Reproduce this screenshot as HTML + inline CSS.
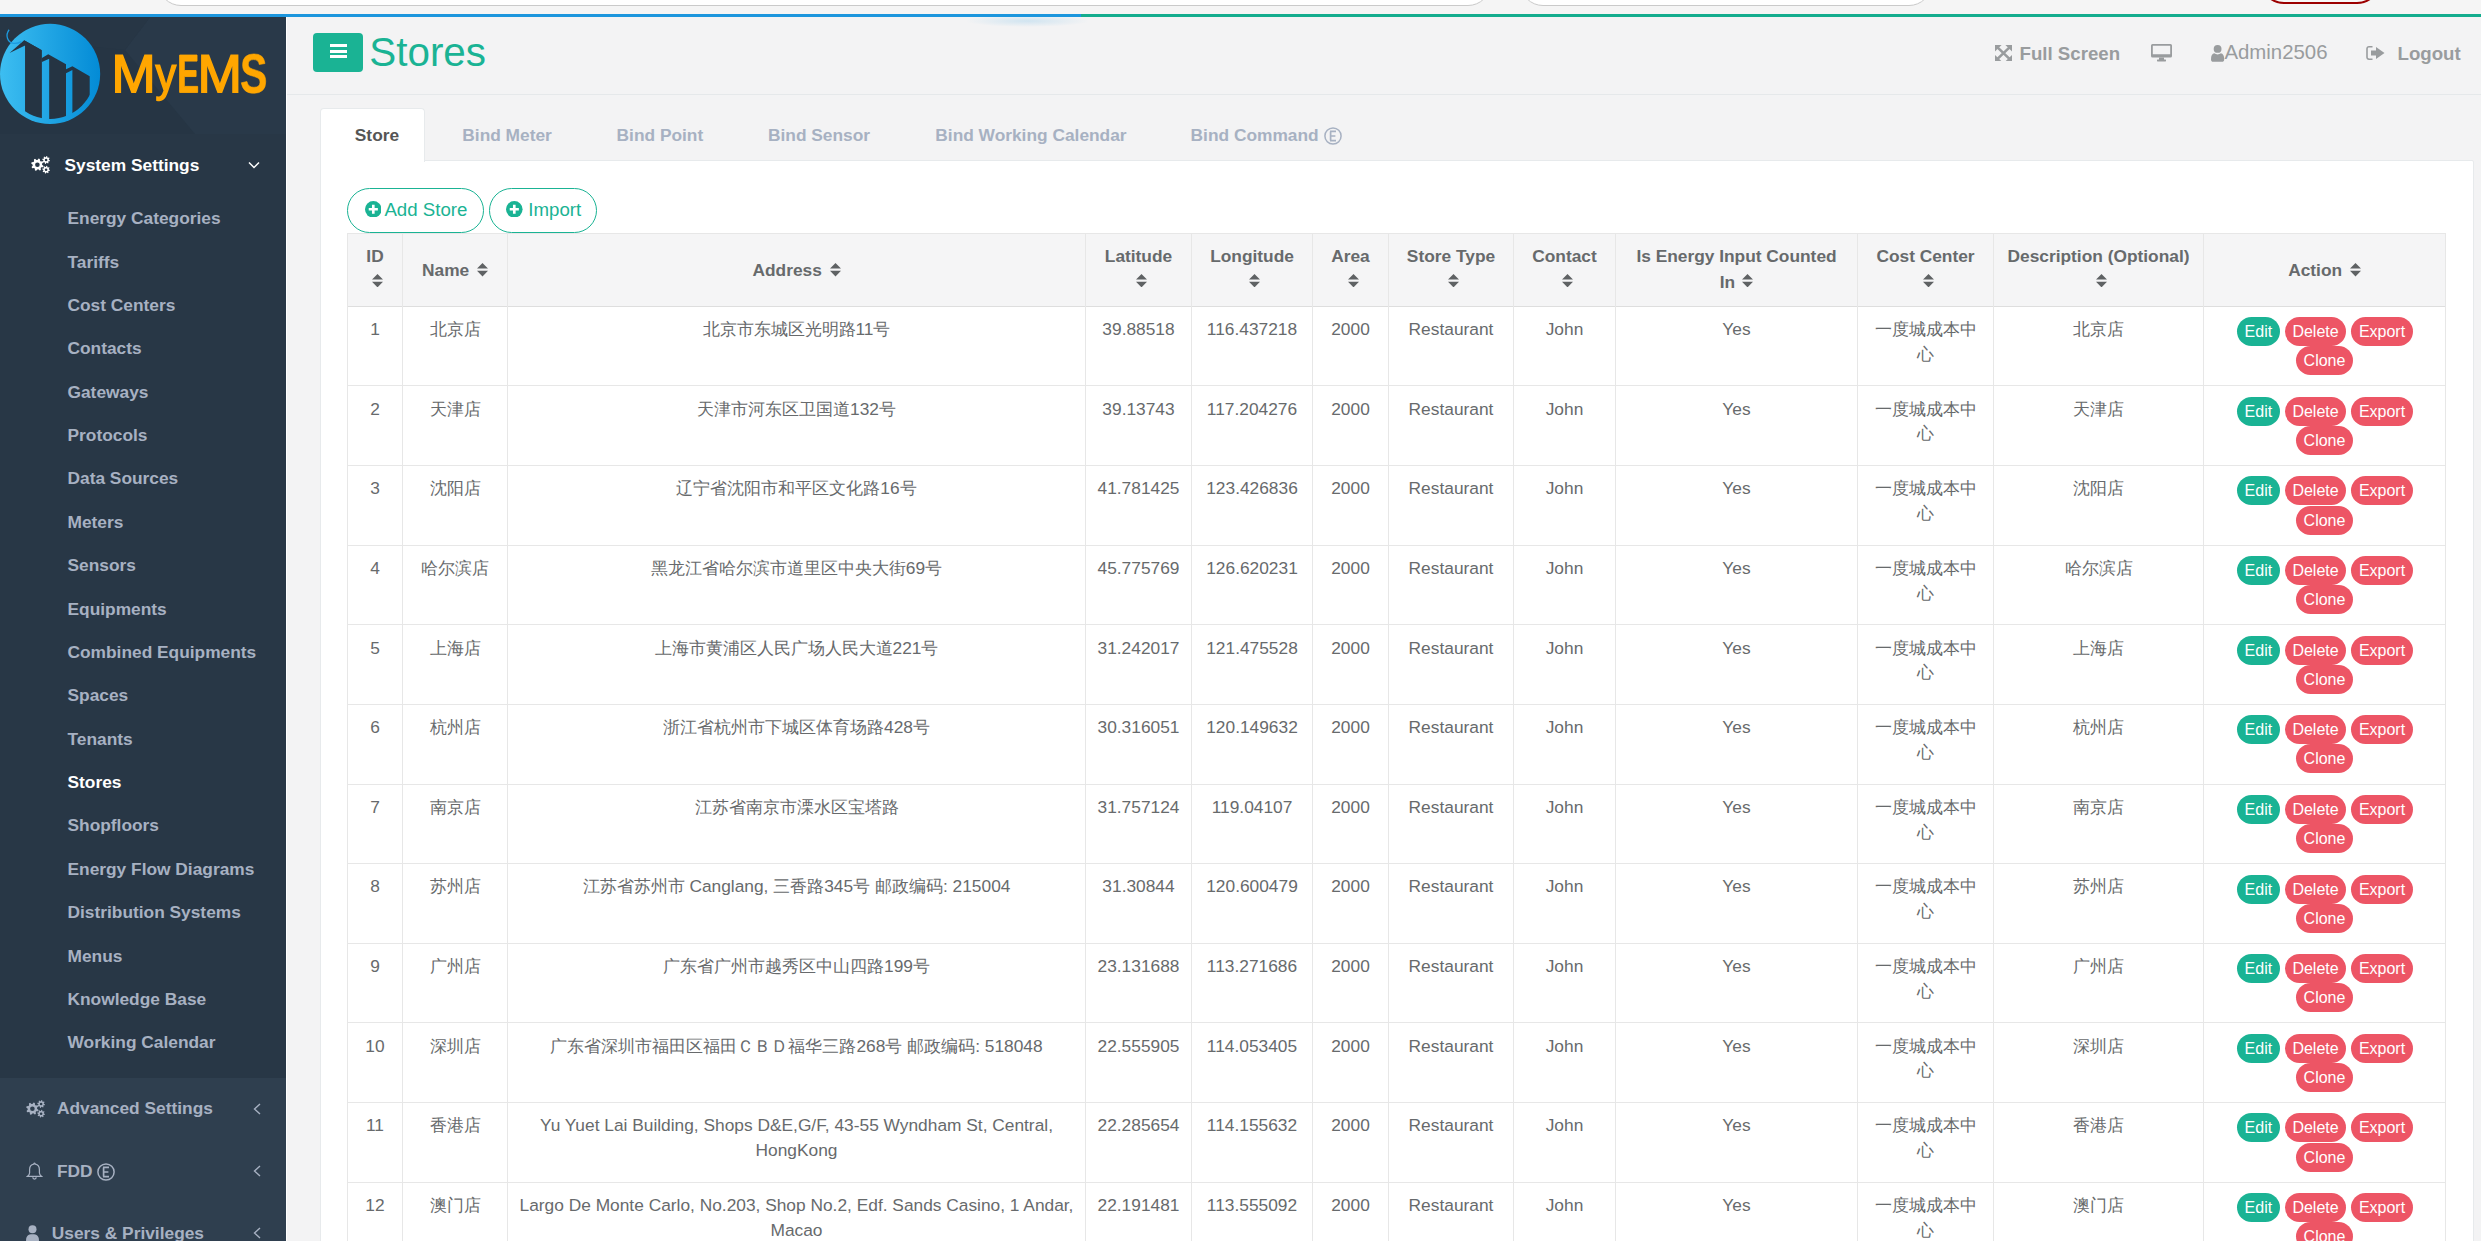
<!DOCTYPE html><html><head><meta charset="utf-8"><style>
*{box-sizing:border-box;margin:0;padding:0}
html,body{width:2481px;height:1241px;overflow:hidden;background:#f3f3f4;font-family:"Liberation Sans",sans-serif;color:#676a6c;font-size:17.333px;line-height:24.76px}
.abs{position:absolute}
#topbar{left:0;top:0;width:2481px;height:14px;background:#f5f5f5;overflow:hidden}
.inp{position:absolute;top:-40px;height:45.5px;background:#fff;border:1.5px solid #cacaca;border-radius:28px}
#pbar{left:0;top:14px;width:2481px;height:3px;background:#14ad8e}
#pbar2{left:0;top:14px;width:1081px;height:3px;background:#1c96dd}
#glow{left:965px;top:15px;width:125px;height:12px;border-radius:50%;background:radial-gradient(ellipse at center,rgba(28,150,221,.16),rgba(28,150,221,0) 70%)}
#sidebar{left:0;top:17px;width:286px;height:1224px;background:#2f3f4f;overflow:hidden}
#navhdr{left:0;top:0;width:286px;height:117px;background:#263544;overflow:hidden}
#active{left:0;top:117px;width:286px;height:944px;background:#283746}
.nt{position:absolute;font-weight:bold;color:#a7b1c2;font-size:17.333px;line-height:24.76px;white-space:nowrap}
#content{left:286px;top:17px;width:2195px;height:1224px;background:#f3f3f4}
</style></head><body>
<div id="topbar" class="abs"><div class="inp" style="left:158px;width:1333px"></div><div class="inp" style="left:1520px;width:412px"></div><div class="inp" style="left:2259.5px;width:121px;top:-44px;height:47.6px;background:#f8f8f8;border-color:#9c0000;border-width:2.2px"></div></div>
<div id="pbar" class="abs"></div><div id="pbar2" class="abs"></div>
<div id="sidebar" class="abs">
<div id="navhdr" class="abs">
<svg class="abs" style="left:0;top:0" width="286" height="117"><polygon points="150,0 286,0 286,117 195,117 125,33" fill="#293949"/><polygon points="0,0 150,0 125,33 0,20" fill="#273645"/></svg>
<svg class="abs" style="left:0;top:0" width="110" height="113" viewBox="0 0 1208 1241"><defs><linearGradient id="lg" x1="0" x2="1" y1="0" y2="0"><stop offset="0" stop-color="#3dbef1"/><stop offset="1" stop-color="#038bd6"/></linearGradient><clipPath id="cc"><circle cx="550" cy="625" r="494"/></clipPath></defs><circle cx="550" cy="625" r="550" fill="url(#lg)"/><g fill="#253443"><polygon points="105,395 265,255 460,365 275,312"/><g clip-path="url(#cc)"><polygon points="275,300 265,255 460,365 460,1300 275,1300"/><polygon points="460,450 530,410 725,520 725,1300 540,1300 540,458 460,494"/><polygon points="725,575 795,540 985,650 985,1300 795,1300 795,582 725,617"/></g></g><path d="M100,140 C55,200 80,280 150,290 C180,292 210,285 235,270" fill="none" stroke="#1c9be0" stroke-width="14"/></svg>
<svg class="abs" style="left:0;top:0" width="286" height="117"><g fill="#ffa600" stroke="#ffa600" stroke-linejoin="miter"><path transform="translate(111.50,75.05) scale(0.02591,-0.02598)" stroke-width="1.7" vector-effect="non-scaling-stroke" d="M1366 0V940Q1366 1096 1375 1240Q1326 1061 1287 960L923 0H789L420 960L364 1130L331 1240L334 1129L338 940V0H168V1409H419L794 432Q814 373 832 306Q851 238 857 208Q865 248 890 330Q916 411 925 432L1293 1409H1538V0Z"/><path transform="translate(155.55,73.55) scale(0.02010,-0.02329)" stroke-width="1.5" vector-effect="non-scaling-stroke" d="M191 -425Q117 -425 67 -414V-279Q105 -285 151 -285Q319 -285 417 -38L434 5L5 1082H197L425 484Q430 470 437 450Q444 431 482 320Q520 209 523 196L593 393L830 1082H1020L604 0Q537 -173 479 -258Q421 -342 350 -384Q280 -425 191 -425Z"/><path transform="translate(177.50,75.45) scale(0.01567,-0.02654)" stroke-width="0.9" vector-effect="non-scaling-stroke" d="M137 0V1409H1245V1181H432V827H1184V599H432V228H1286V0Z"/><path transform="translate(197.58,75.05) scale(0.02599,-0.02598)" stroke-width="1.7" vector-effect="non-scaling-stroke" d="M1366 0V940Q1366 1096 1375 1240Q1326 1061 1287 960L923 0H789L420 960L364 1130L331 1240L334 1129L338 940V0H168V1409H419L794 432Q814 373 832 306Q851 238 857 208Q865 248 890 330Q916 411 925 432L1293 1409H1538V0Z"/><path transform="translate(240.13,75.76) scale(0.01989,-0.02717)" stroke-width="0.6" vector-effect="non-scaling-stroke" d="M1286 406Q1286 199 1132 90Q979 -20 682 -20Q411 -20 257 76Q103 172 59 367L344 414Q373 302 457 252Q541 201 690 201Q999 201 999 389Q999 449 964 488Q928 527 864 553Q799 579 616 616Q458 653 396 676Q334 698 284 728Q234 759 199 802Q164 845 144 903Q125 961 125 1036Q125 1227 268 1328Q412 1430 686 1430Q948 1430 1080 1348Q1211 1266 1249 1077L963 1038Q941 1129 874 1175Q806 1221 680 1221Q412 1221 412 1053Q412 998 440 963Q469 928 525 904Q581 879 752 842Q955 799 1042 762Q1130 726 1181 678Q1232 629 1259 562Q1286 494 1286 406Z"/></g></svg>
</div>
<div id="active" class="abs"></div>
<svg class="abs" style="left:29.5px;top:138px" width="22" height="20" viewBox="0 0 22 20"><path fill="#ffffff" fill-rule="evenodd" d="M13.57,10.95 L13.21,12.13 L11.30,12.33 L10.71,13.04 L10.88,14.95 L9.79,15.53 L8.30,14.31 L7.38,14.40 L6.15,15.87 L4.97,15.51 L4.77,13.60 L4.06,13.01 L2.15,13.18 L1.57,12.09 L2.79,10.60 L2.70,9.68 L1.23,8.45 L1.59,7.27 L3.50,7.07 L4.09,6.36 L3.92,4.45 L5.01,3.87 L6.50,5.09 L7.42,5.00 L8.65,3.53 L9.83,3.89 L10.03,5.80 L10.74,6.39 L12.65,6.22 L13.23,7.31 L12.01,8.80 L12.10,9.72ZM9.70,9.70 A2.3,2.3 0 1 0 5.10,9.70 A2.3,2.3 0 1 0 9.70,9.70Z"/><path fill="#ffffff" fill-rule="evenodd" d="M19.98,5.39 L19.83,6.14 L18.57,6.32 L18.26,6.78 L18.57,8.02 L17.93,8.44 L16.91,7.68 L16.37,7.79 L15.71,8.88 L14.96,8.73 L14.78,7.47 L14.32,7.16 L13.08,7.47 L12.66,6.83 L13.42,5.81 L13.31,5.27 L12.22,4.61 L12.37,3.86 L13.63,3.68 L13.94,3.22 L13.63,1.98 L14.27,1.56 L15.29,2.32 L15.83,2.21 L16.49,1.12 L17.24,1.27 L17.42,2.53 L17.88,2.84 L19.12,2.53 L19.54,3.17 L18.78,4.19 L18.89,4.73ZM17.40,5.00 A1.3,1.3 0 1 0 14.80,5.00 A1.3,1.3 0 1 0 17.40,5.00Z"/><path fill="#ffffff" fill-rule="evenodd" d="M19.98,15.09 L19.83,15.84 L18.57,16.02 L18.26,16.48 L18.57,17.72 L17.93,18.14 L16.91,17.38 L16.37,17.49 L15.71,18.58 L14.96,18.43 L14.78,17.17 L14.32,16.86 L13.08,17.17 L12.66,16.53 L13.42,15.51 L13.31,14.97 L12.22,14.31 L12.37,13.56 L13.63,13.38 L13.94,12.92 L13.63,11.68 L14.27,11.26 L15.29,12.02 L15.83,11.91 L16.49,10.82 L17.24,10.97 L17.42,12.23 L17.88,12.54 L19.12,12.23 L19.54,12.87 L18.78,13.89 L18.89,14.43ZM17.40,14.70 A1.3,1.3 0 1 0 14.80,14.70 A1.3,1.3 0 1 0 17.40,14.70Z"/></svg>
<div class="nt" style="left:64.5px;top:135.66px;color:#ffffff;font-size:17.333px;line-height:24.76px;font-weight:bold;">System Settings</div>
<svg class="abs" style="left:247px;top:143px" width="14" height="10" viewBox="0 0 14 10"><polyline points="2,2.5 7,7.5 12,2.5" fill="none" stroke="#fff" stroke-width="1.5"/></svg>
<div class="nt" style="left:67.5px;top:189.21px;color:#a7b1c2;font-size:17.333px;line-height:24.76px;font-weight:bold;">Energy Categories</div>
<div class="nt" style="left:67.5px;top:232.58px;color:#a7b1c2;font-size:17.333px;line-height:24.76px;font-weight:bold;">Tariffs</div>
<div class="nt" style="left:67.5px;top:275.95px;color:#a7b1c2;font-size:17.333px;line-height:24.76px;font-weight:bold;">Cost Centers</div>
<div class="nt" style="left:67.5px;top:319.32px;color:#a7b1c2;font-size:17.333px;line-height:24.76px;font-weight:bold;">Contacts</div>
<div class="nt" style="left:67.5px;top:362.69px;color:#a7b1c2;font-size:17.333px;line-height:24.76px;font-weight:bold;">Gateways</div>
<div class="nt" style="left:67.5px;top:406.06px;color:#a7b1c2;font-size:17.333px;line-height:24.76px;font-weight:bold;">Protocols</div>
<div class="nt" style="left:67.5px;top:449.43px;color:#a7b1c2;font-size:17.333px;line-height:24.76px;font-weight:bold;">Data Sources</div>
<div class="nt" style="left:67.5px;top:492.80px;color:#a7b1c2;font-size:17.333px;line-height:24.76px;font-weight:bold;">Meters</div>
<div class="nt" style="left:67.5px;top:536.17px;color:#a7b1c2;font-size:17.333px;line-height:24.76px;font-weight:bold;">Sensors</div>
<div class="nt" style="left:67.5px;top:579.54px;color:#a7b1c2;font-size:17.333px;line-height:24.76px;font-weight:bold;">Equipments</div>
<div class="nt" style="left:67.5px;top:622.91px;color:#a7b1c2;font-size:17.333px;line-height:24.76px;font-weight:bold;">Combined Equipments</div>
<div class="nt" style="left:67.5px;top:666.28px;color:#a7b1c2;font-size:17.333px;line-height:24.76px;font-weight:bold;">Spaces</div>
<div class="nt" style="left:67.5px;top:709.65px;color:#a7b1c2;font-size:17.333px;line-height:24.76px;font-weight:bold;">Tenants</div>
<div class="nt" style="left:67.5px;top:753.02px;color:#ffffff;font-size:17.333px;line-height:24.76px;font-weight:bold;">Stores</div>
<div class="nt" style="left:67.5px;top:796.39px;color:#a7b1c2;font-size:17.333px;line-height:24.76px;font-weight:bold;">Shopfloors</div>
<div class="nt" style="left:67.5px;top:839.76px;color:#a7b1c2;font-size:17.333px;line-height:24.76px;font-weight:bold;">Energy Flow Diagrams</div>
<div class="nt" style="left:67.5px;top:883.13px;color:#a7b1c2;font-size:17.333px;line-height:24.76px;font-weight:bold;">Distribution Systems</div>
<div class="nt" style="left:67.5px;top:926.50px;color:#a7b1c2;font-size:17.333px;line-height:24.76px;font-weight:bold;">Menus</div>
<div class="nt" style="left:67.5px;top:969.87px;color:#a7b1c2;font-size:17.333px;line-height:24.76px;font-weight:bold;">Knowledge Base</div>
<div class="nt" style="left:67.5px;top:1013.24px;color:#a7b1c2;font-size:17.333px;line-height:24.76px;font-weight:bold;">Working Calendar</div>
<svg class="abs" style="left:24.8px;top:1081.5px" width="22" height="20" viewBox="0 0 22 20"><path fill="#a7b1c2" fill-rule="evenodd" d="M13.57,10.95 L13.21,12.13 L11.30,12.33 L10.71,13.04 L10.88,14.95 L9.79,15.53 L8.30,14.31 L7.38,14.40 L6.15,15.87 L4.97,15.51 L4.77,13.60 L4.06,13.01 L2.15,13.18 L1.57,12.09 L2.79,10.60 L2.70,9.68 L1.23,8.45 L1.59,7.27 L3.50,7.07 L4.09,6.36 L3.92,4.45 L5.01,3.87 L6.50,5.09 L7.42,5.00 L8.65,3.53 L9.83,3.89 L10.03,5.80 L10.74,6.39 L12.65,6.22 L13.23,7.31 L12.01,8.80 L12.10,9.72ZM9.70,9.70 A2.3,2.3 0 1 0 5.10,9.70 A2.3,2.3 0 1 0 9.70,9.70Z"/><path fill="#a7b1c2" fill-rule="evenodd" d="M19.98,5.39 L19.83,6.14 L18.57,6.32 L18.26,6.78 L18.57,8.02 L17.93,8.44 L16.91,7.68 L16.37,7.79 L15.71,8.88 L14.96,8.73 L14.78,7.47 L14.32,7.16 L13.08,7.47 L12.66,6.83 L13.42,5.81 L13.31,5.27 L12.22,4.61 L12.37,3.86 L13.63,3.68 L13.94,3.22 L13.63,1.98 L14.27,1.56 L15.29,2.32 L15.83,2.21 L16.49,1.12 L17.24,1.27 L17.42,2.53 L17.88,2.84 L19.12,2.53 L19.54,3.17 L18.78,4.19 L18.89,4.73ZM17.40,5.00 A1.3,1.3 0 1 0 14.80,5.00 A1.3,1.3 0 1 0 17.40,5.00Z"/><path fill="#a7b1c2" fill-rule="evenodd" d="M19.98,15.09 L19.83,15.84 L18.57,16.02 L18.26,16.48 L18.57,17.72 L17.93,18.14 L16.91,17.38 L16.37,17.49 L15.71,18.58 L14.96,18.43 L14.78,17.17 L14.32,16.86 L13.08,17.17 L12.66,16.53 L13.42,15.51 L13.31,14.97 L12.22,14.31 L12.37,13.56 L13.63,13.38 L13.94,12.92 L13.63,11.68 L14.27,11.26 L15.29,12.02 L15.83,11.91 L16.49,10.82 L17.24,10.97 L17.42,12.23 L17.88,12.54 L19.12,12.23 L19.54,12.87 L18.78,13.89 L18.89,14.43ZM17.40,14.70 A1.3,1.3 0 1 0 14.80,14.70 A1.3,1.3 0 1 0 17.40,14.70Z"/></svg>
<div class="nt" style="left:56.9px;top:1079.21px;color:#a7b1c2;font-size:17.333px;line-height:24.76px;font-weight:bold;">Advanced Settings</div>
<svg class="abs" style="left:251px;top:1085px" width="12" height="14" viewBox="0 0 12 14"><polyline points="9,2 3.5,7 9,12" fill="none" stroke="#a7b1c2" stroke-width="1.4"/></svg>
<svg class="abs" style="left:26.3px;top:1144.6px" width="17" height="18" viewBox="0 0 18 19"><path d="M9,1.2 C9.6,1.2 9.8,1.7 9.8,2.3 C12.8,2.8 14.2,5.2 14.2,8.2 L14.2,11.5 C14.2,13 15.3,14.2 16.6,15.2 L1.4,15.2 C2.7,14.2 3.8,13 3.8,11.5 L3.8,8.2 C3.8,5.2 5.2,2.8 8.2,2.3 C8.2,1.7 8.4,1.2 9,1.2Z M7.2,16.2 C7.2,17.3 8,18 9,18 C10,18 10.8,17.3 10.8,16.2" fill="none" stroke="#a7b1c2" stroke-width="1.3"/></svg>
<div class="nt" style="left:56.9px;top:1142.31px;color:#a7b1c2;font-size:17.333px;line-height:24.76px;font-weight:bold;">FDD</div>
<svg class="abs" style="left:97px;top:1145.8px" width="18" height="18" viewBox="0 0 18 18"><circle cx="9" cy="9" r="8.1" fill="none" stroke="#a7b1c2" stroke-width="1.5"/><path d="M6,4.4 H12 M6.6,9 H11.4 M6,13.6 H12 M6.6,4.4 V13.6" fill="none" stroke="#a7b1c2" stroke-width="1.7"/></svg>
<svg class="abs" style="left:251px;top:1147px" width="12" height="14" viewBox="0 0 12 14"><polyline points="9,2 3.5,7 9,12" fill="none" stroke="#a7b1c2" stroke-width="1.4"/></svg>
<svg class="abs" style="left:26px;top:1207.5px" width="14" height="18" viewBox="0 0 14 18"><circle fill="#a7b1c2" cx="6.5" cy="4.2" r="4"/><path fill="#a7b1c2" d="M0,16 C0,11 2,9.3 6.5,9.3 C11,9.3 13,11 13,16 L13,18 L0,18Z"/></svg>
<div class="nt" style="left:51.8px;top:1204.41px;color:#a7b1c2;font-size:17.333px;line-height:24.76px;font-weight:bold;">Users &amp; Privileges</div>
<svg class="abs" style="left:251px;top:1209px" width="12" height="14" viewBox="0 0 12 14"><polyline points="9,2 3.5,7 9,12" fill="none" stroke="#a7b1c2" stroke-width="1.4"/></svg>
</div>
<div id="content" class="abs">
<div class="abs" style="left:0;top:0;width:1px;height:1224px;background:#fff"></div>
<div class="abs" style="left:1px;top:77px;width:2194px;height:1px;background:#e5e8ea"></div>
<div class="abs" style="left:27px;top:16px;width:50px;height:39px;border-radius:4px;background:#1ab394"></div>
<div class="abs" style="left:43.80000000000001px;top:27px;width:17px;height:3px;background:#fff"></div>
<div class="abs" style="left:43.80000000000001px;top:33px;width:17px;height:3px;background:#fff"></div>
<div class="abs" style="left:43.80000000000001px;top:38px;width:17px;height:3px;background:#fff"></div>
<div class="abs" style="left:83.30000000000001px;top:7.133000000000006px;font-size:40.4px;line-height:57.14px;color:#1ab394;white-space:nowrap">Stores</div>
<svg class="abs" style="left:1709px;top:28px" width="17" height="16.3" viewBox="0 0 17 16.3"><g fill="#999c9e"><polygon points="0,0 6.6,0 0,6.4"/><polygon points="17,0 10.4,0 17,6.4"/><polygon points="0,16.3 6.6,16.3 0,9.9"/><polygon points="17,16.3 10.4,16.3 17,9.9"/></g><path d="M2.5,2.4 L14.5,13.9 M14.5,2.4 L2.5,13.9" stroke="#999c9e" stroke-width="2.6"/></svg>
<div class="abs" style="left:1733.50px;top:23.50px;font-size:18.67px;line-height:26.67px;font-weight:bold;color:#999c9e;white-space:nowrap;">Full Screen</div>
<svg class="abs" style="left:1865.1999999999998px;top:26.799999999999997px" width="21" height="18" viewBox="0 0 21 18"><g fill="#999c9e"><path fill-rule="evenodd" d="M1,0 H19.6 A1,1 0 0 1 20.6,1 V13.6 A1,1 0 0 1 19.6,14.6 H1 A1,1 0 0 1 0,13.6 V1 A1,1 0 0 1 1,0Z M1.1,1.1 V11 H19.5 V1.1Z"/><polygon points="8.2,14.6 12.4,14.6 12.9,16.3 7.7,16.3"/><rect x="7.2" y="16" width="6.2" height="1.4" rx="0.5"/></g></svg>
<svg class="abs" style="left:26px;top:1207.5px" width="14" height="18" viewBox="0 0 14 18"><circle fill="#a7b1c2" cx="6.5" cy="4.2" r="4"/><path fill="#a7b1c2" d="M0,16 C0,11 2,9.3 6.5,9.3 C11,9.3 13,11 13,16 L13,18 L0,18Z"/></svg>
<div class="nt" style="left:51.8px;top:1204.41px;color:#a7b1c2;font-size:17.333px;line-height:24.76px;font-weight:bold;">Users &amp; Privileges</div>
<svg class="abs" style="left:251px;top:1209px" width="12" height="14" viewBox="0 0 12 14"><polyline points="9,2 3.5,7 9,12" fill="none" stroke="#a7b1c2" stroke-width="1.4"/></svg>
</div>
<div id="content" class="abs">
<div class="abs" style="left:0;top:0;width:1px;height:1224px;background:#fff"></div>
<div class="abs" style="left:1px;top:77px;width:2194px;height:1px;background:#e5e8ea"></div>
<div class="abs" style="left:27px;top:16px;width:50px;height:39px;border-radius:4px;background:#1ab394"></div>
<div class="abs" style="left:43.80000000000001px;top:27px;width:17px;height:3px;background:#fff"></div>
<div class="abs" style="left:43.80000000000001px;top:33px;width:17px;height:3px;background:#fff"></div>
<div class="abs" style="left:43.80000000000001px;top:38px;width:17px;height:3px;background:#fff"></div>
<div class="abs" style="left:83.30000000000001px;top:7.133000000000006px;font-size:40.4px;line-height:57.14px;color:#1ab394;white-space:nowrap">Stores</div>
<svg class="abs" style="left:1709px;top:28px" width="17" height="16.3" viewBox="0 0 17 16.3"><g fill="#999c9e"><polygon points="0,0 6.6,0 0,6.4"/><polygon points="17,0 10.4,0 17,6.4"/><polygon points="0,16.3 6.6,16.3 0,9.9"/><polygon points="17,16.3 10.4,16.3 17,9.9"/></g><path d="M2.5,2.4 L14.5,13.9 M14.5,2.4 L2.5,13.9" stroke="#999c9e" stroke-width="2.6"/></svg>
<div class="abs" style="left:1733.50px;top:23.50px;font-size:18.67px;line-height:26.67px;font-weight:bold;color:#999c9e;white-space:nowrap;">Full Screen</div>
<svg class="abs" style="left:1865px;top:26.799999999999997px" width="21" height="18" viewBox="0 0 21 18"><g fill="#999c9e"><path fill-rule="evenodd" d="M1.5,0 H19.5 A1.5,1.5 0 0 1 21,1.5 V12 A1.5,1.5 0 0 1 19.5,13.5 H1.5 A1.5,1.5 0 0 1 0,12 V1.5 A1.5,1.5 0 0 1 1.5,0Z M1.8,1.8 V10.2 H19.2 V1.8Z"/><rect x="8" y="13.5" width="5" height="2.5"/><rect x="6" y="15.6" width="9" height="1.8" rx="0.6"/></g></svg>
<svg class="abs" style="left:1924.8000000000002px;top:27.799999999999997px" width="14" height="17" viewBox="0 0 14 17"><g fill="#999c9e"><circle cx="6.6" cy="3.9" r="3.9"/><path d="M0,14.5 C0,10.5 1.2,8.6 3.4,8.3 C4.4,9.1 5.4,9.4 6.6,9.4 C7.8,9.4 8.8,9.1 9.8,8.3 C12,8.6 13.2,10.5 13.2,14.5 C13.2,16 12.3,16.8 11,16.8 H2.2 C0.9,16.8 0,16 0,14.5Z"/></g></svg>
<div class="abs" style="left:1938.40px;top:21.26px;font-size:20.4px;line-height:29.14px;font-weight:normal;color:#999c9e;white-space:nowrap;">Admin2506</div>
<svg class="abs" style="left:2079.8px;top:27.700000000000003px" width="19" height="16" viewBox="0 0 19 16"><g fill="#999c9e"><path d="M6.5,1 V2.6 H3 C2.4,2.6 1.8,3.1 1.8,3.8 V12.2 C1.8,12.9 2.4,13.4 3,13.4 H6.5 V15 H3 C1.4,15 0.2,13.8 0.2,12.2 V3.8 C0.2,2.2 1.4,1 3,1Z"/><path d="M5,5.6 H10 V2 L18.5,8 L10,14 V10.4 H5Z"/></g></svg>
<div class="abs" style="left:2111.50px;top:23.50px;font-size:18.67px;line-height:26.67px;font-weight:bold;color:#999c9e;white-space:nowrap;">Logout</div>
<div class="abs" style="left:34px;top:143px;width:2154.0px;height:1200px;background:#fff;border:1px solid #e7eaec;border-radius:0 2px 0 0"></div>
<div class="abs" style="left:34px;top:91.4px;width:105.4px;height:54px;background:#fff;border:1px solid #e7eaec;border-bottom:none;border-radius:4px 4px 0 0"></div>
<div class="abs" style="left:68.80px;top:106.01px;font-size:17.333px;line-height:24.76px;font-weight:bold;color:#555555;white-space:nowrap;">Store</div>
<div class="abs" style="left:176.30px;top:106.01px;font-size:17.333px;line-height:24.76px;font-weight:bold;color:#a7b1c2;white-space:nowrap;">Bind Meter</div>
<div class="abs" style="left:330.60px;top:106.01px;font-size:17.333px;line-height:24.76px;font-weight:bold;color:#a7b1c2;white-space:nowrap;">Bind Point</div>
<div class="abs" style="left:482.00px;top:106.01px;font-size:17.333px;line-height:24.76px;font-weight:bold;color:#a7b1c2;white-space:nowrap;">Bind Sensor</div>
<div class="abs" style="left:649.30px;top:106.01px;font-size:17.333px;line-height:24.76px;font-weight:bold;color:#a7b1c2;white-space:nowrap;">Bind Working Calendar</div>
<div class="abs" style="left:904.60px;top:106.01px;font-size:17.333px;line-height:24.76px;font-weight:bold;color:#a7b1c2;white-space:nowrap;">Bind Command</div>
<svg class="abs" style="left:1037.8px;top:110.3px" width="18" height="18" viewBox="0 0 18 18"><circle cx="9" cy="9" r="8.1" fill="none" stroke="#a7b1c2" stroke-width="1.5"/><path d="M6,4.4 H12 M6.6,9 H11.4 M6,13.6 H12 M6.6,4.4 V13.6" fill="none" stroke="#a7b1c2" stroke-width="1.7"/></svg>
<div class="abs" style="left:61.10000000000002px;top:170.8px;width:136.8px;height:45px;border:1.3px solid #1ab394;border-radius:30px;background:#fff"></div><svg class="abs" style="left:78.5px;top:183.8px" width="16.6" height="16.6" viewBox="0 0 20 20"><circle cx="10" cy="10" r="10" fill="#1ab394"/><path d="M10,4.5 V15.5 M4.5,10 H15.5" stroke="#fff" stroke-width="3.2"/></svg><div class="abs" style="left:98.40px;top:180.00px;font-size:18.67px;line-height:26.67px;font-weight:normal;color:#1ab394;white-space:nowrap;">Add Store</div>
<div class="abs" style="left:202.89999999999998px;top:170.8px;width:108.1px;height:45px;border:1.3px solid #1ab394;border-radius:30px;background:#fff"></div><svg class="abs" style="left:220.3px;top:183.8px" width="16.6" height="16.6" viewBox="0 0 20 20"><circle cx="10" cy="10" r="10" fill="#1ab394"/><path d="M10,4.5 V15.5 M4.5,10 H15.5" stroke="#fff" stroke-width="3.2"/></svg><div class="abs" style="left:242.30px;top:180.00px;font-size:18.67px;line-height:26.67px;font-weight:normal;color:#1ab394;white-space:nowrap;">Import</div>
<div class="abs" style="left:61px;top:216px;width:2099px;height:74px;background:#f5f5f6;border-top:1px solid #e7e7e7;border-left:1px solid #e7e7e7"></div>
<div class="abs" style="left:61px;top:288.5px;width:2099px;height:1.3px;background:#dedede"></div>
<div class="abs" style="left:116px;top:216px;width:1px;height:1008px;background:#e7e7e7"></div>
<div class="abs" style="left:221px;top:216px;width:1px;height:1008px;background:#e7e7e7"></div>
<div class="abs" style="left:799px;top:216px;width:1px;height:1008px;background:#e7e7e7"></div>
<div class="abs" style="left:905px;top:216px;width:1px;height:1008px;background:#e7e7e7"></div>
<div class="abs" style="left:1026px;top:216px;width:1px;height:1008px;background:#e7e7e7"></div>
<div class="abs" style="left:1102px;top:216px;width:1px;height:1008px;background:#e7e7e7"></div>
<div class="abs" style="left:1227px;top:216px;width:1px;height:1008px;background:#e7e7e7"></div>
<div class="abs" style="left:1329px;top:216px;width:1px;height:1008px;background:#e7e7e7"></div>
<div class="abs" style="left:1571px;top:216px;width:1px;height:1008px;background:#e7e7e7"></div>
<div class="abs" style="left:1707px;top:216px;width:1px;height:1008px;background:#e7e7e7"></div>
<div class="abs" style="left:1917px;top:216px;width:1px;height:1008px;background:#e7e7e7"></div>
<div class="abs" style="left:2159px;top:216px;width:1px;height:1008px;background:#e7e7e7"></div>
<div class="abs" style="left:61px;top:216px;width:1px;height:1008px;background:#e7e7e7"></div>
<div class="abs" style="left:61px;top:368.42px;width:2099px;height:1px;background:#e7e7e7"></div>
<div class="abs" style="left:61px;top:448.04px;width:2099px;height:1px;background:#e7e7e7"></div>
<div class="abs" style="left:61px;top:527.66px;width:2099px;height:1px;background:#e7e7e7"></div>
<div class="abs" style="left:61px;top:607.28px;width:2099px;height:1px;background:#e7e7e7"></div>
<div class="abs" style="left:61px;top:686.90px;width:2099px;height:1px;background:#e7e7e7"></div>
<div class="abs" style="left:61px;top:766.52px;width:2099px;height:1px;background:#e7e7e7"></div>
<div class="abs" style="left:61px;top:846.14px;width:2099px;height:1px;background:#e7e7e7"></div>
<div class="abs" style="left:61px;top:925.76px;width:2099px;height:1px;background:#e7e7e7"></div>
<div class="abs" style="left:61px;top:1005.38px;width:2099px;height:1px;background:#e7e7e7"></div>
<div class="abs" style="left:61px;top:1085.00px;width:2099px;height:1px;background:#e7e7e7"></div>
<div class="abs" style="left:61px;top:1164.62px;width:2099px;height:1px;background:#e7e7e7"></div>
<div class="abs" style="left:62.00px;top:226.61px;width:54.00px;text-align:center;font-size:17.333px;line-height:24.76px;font-weight:bold;color:#676a6c;white-space:nowrap;">ID</div>
<svg class="abs" style="left:86.00px;top:257.00px" width="11" height="13.4" viewBox="0 0 11 13.4"><path d="M5.5,0 L11,5.6 H0Z M0,7.8 H11 L5.5,13.4Z" fill="#5f6264"/></svg>
<div class="abs" style="left:136.05px;top:241.11px;font-size:17.333px;line-height:24.76px;font-weight:bold;color:#676a6c;white-space:nowrap;">Name</div>
<svg class="abs" style="left:190.95px;top:246.20px" width="11" height="13.4" viewBox="0 0 11 13.4"><path d="M5.5,0 L11,5.6 H0Z M0,7.8 H11 L5.5,13.4Z" fill="#5f6264"/></svg>
<div class="abs" style="left:466.48px;top:241.11px;font-size:17.333px;line-height:24.76px;font-weight:bold;color:#676a6c;white-space:nowrap;">Address</div>
<svg class="abs" style="left:543.52px;top:246.20px" width="11" height="13.4" viewBox="0 0 11 13.4"><path d="M5.5,0 L11,5.6 H0Z M0,7.8 H11 L5.5,13.4Z" fill="#5f6264"/></svg>
<div class="abs" style="left:800.00px;top:226.61px;width:105.00px;text-align:center;font-size:17.333px;line-height:24.76px;font-weight:bold;color:#676a6c;white-space:nowrap;">Latitude</div>
<svg class="abs" style="left:849.50px;top:257.00px" width="11" height="13.4" viewBox="0 0 11 13.4"><path d="M5.5,0 L11,5.6 H0Z M0,7.8 H11 L5.5,13.4Z" fill="#5f6264"/></svg>
<div class="abs" style="left:906.00px;top:226.61px;width:120.00px;text-align:center;font-size:17.333px;line-height:24.76px;font-weight:bold;color:#676a6c;white-space:nowrap;">Longitude</div>
<svg class="abs" style="left:963.00px;top:257.00px" width="11" height="13.4" viewBox="0 0 11 13.4"><path d="M5.5,0 L11,5.6 H0Z M0,7.8 H11 L5.5,13.4Z" fill="#5f6264"/></svg>
<div class="abs" style="left:1027.00px;top:226.61px;width:75.00px;text-align:center;font-size:17.333px;line-height:24.76px;font-weight:bold;color:#676a6c;white-space:nowrap;">Area</div>
<svg class="abs" style="left:1061.50px;top:257.00px" width="11" height="13.4" viewBox="0 0 11 13.4"><path d="M5.5,0 L11,5.6 H0Z M0,7.8 H11 L5.5,13.4Z" fill="#5f6264"/></svg>
<div class="abs" style="left:1103.00px;top:226.61px;width:124.00px;text-align:center;font-size:17.333px;line-height:24.76px;font-weight:bold;color:#676a6c;white-space:nowrap;">Store Type</div>
<svg class="abs" style="left:1162.00px;top:257.00px" width="11" height="13.4" viewBox="0 0 11 13.4"><path d="M5.5,0 L11,5.6 H0Z M0,7.8 H11 L5.5,13.4Z" fill="#5f6264"/></svg>
<div class="abs" style="left:1228.00px;top:226.61px;width:101.00px;text-align:center;font-size:17.333px;line-height:24.76px;font-weight:bold;color:#676a6c;white-space:nowrap;">Contact</div>
<svg class="abs" style="left:1275.50px;top:257.00px" width="11" height="13.4" viewBox="0 0 11 13.4"><path d="M5.5,0 L11,5.6 H0Z M0,7.8 H11 L5.5,13.4Z" fill="#5f6264"/></svg>
<div class="abs" style="left:1330.00px;top:226.61px;width:241.00px;text-align:center;font-size:17.333px;line-height:24.76px;font-weight:bold;color:#676a6c;white-space:nowrap;">Is Energy Input Counted</div>
<div class="abs" style="left:1433.80px;top:252.61px;font-size:17.333px;line-height:24.76px;font-weight:bold;color:#676a6c;white-space:nowrap;">In</div>
<svg class="abs" style="left:1456.20px;top:257.00px" width="11" height="13.4" viewBox="0 0 11 13.4"><path d="M5.5,0 L11,5.6 H0Z M0,7.8 H11 L5.5,13.4Z" fill="#5f6264"/></svg>
<div class="abs" style="left:1572.00px;top:226.61px;width:135.00px;text-align:center;font-size:17.333px;line-height:24.76px;font-weight:bold;color:#676a6c;white-space:nowrap;">Cost Center</div>
<svg class="abs" style="left:1636.50px;top:257.00px" width="11" height="13.4" viewBox="0 0 11 13.4"><path d="M5.5,0 L11,5.6 H0Z M0,7.8 H11 L5.5,13.4Z" fill="#5f6264"/></svg>
<div class="abs" style="left:1708.00px;top:226.61px;width:209.00px;text-align:center;font-size:17.333px;line-height:24.76px;font-weight:bold;color:#676a6c;white-space:nowrap;">Description (Optional)</div>
<svg class="abs" style="left:1809.50px;top:257.00px" width="11" height="13.4" viewBox="0 0 11 13.4"><path d="M5.5,0 L11,5.6 H0Z M0,7.8 H11 L5.5,13.4Z" fill="#5f6264"/></svg>
<div class="abs" style="left:2002.20px;top:241.11px;font-size:17.333px;line-height:24.76px;font-weight:bold;color:#676a6c;white-space:nowrap;">Action</div>
<svg class="abs" style="left:2063.80px;top:246.20px" width="11" height="13.4" viewBox="0 0 11 13.4"><path d="M5.5,0 L11,5.6 H0Z M0,7.8 H11 L5.5,13.4Z" fill="#5f6264"/></svg>
<div class="abs" style="left:62.00px;top:300.11px;width:54.00px;text-align:center;font-size:17.333px;line-height:24.76px;font-weight:normal;color:#676a6c;white-space:nowrap;">1</div>
<div class="abs" style="left:117.00px;top:300.11px;width:104.00px;text-align:center;font-size:17.333px;line-height:24.76px;font-weight:normal;color:#676a6c;white-space:nowrap;">北京店</div>
<div class="abs" style="left:222.00px;top:300.11px;width:577.00px;text-align:center;font-size:17.333px;line-height:24.76px;font-weight:normal;color:#676a6c;white-space:nowrap;">北京市东城区光明路11号</div>
<div class="abs" style="left:800.00px;top:300.11px;width:105.00px;text-align:center;font-size:17.333px;line-height:24.76px;font-weight:normal;color:#676a6c;white-space:nowrap;">39.88518</div>
<div class="abs" style="left:906.00px;top:300.11px;width:120.00px;text-align:center;font-size:17.333px;line-height:24.76px;font-weight:normal;color:#676a6c;white-space:nowrap;">116.437218</div>
<div class="abs" style="left:1027.00px;top:300.11px;width:75.00px;text-align:center;font-size:17.333px;line-height:24.76px;font-weight:normal;color:#676a6c;white-space:nowrap;">2000</div>
<div class="abs" style="left:1103.00px;top:300.11px;width:124.00px;text-align:center;font-size:17.333px;line-height:24.76px;font-weight:normal;color:#676a6c;white-space:nowrap;">Restaurant</div>
<div class="abs" style="left:1228.00px;top:300.11px;width:101.00px;text-align:center;font-size:17.333px;line-height:24.76px;font-weight:normal;color:#676a6c;white-space:nowrap;">John</div>
<div class="abs" style="left:1330.00px;top:300.11px;width:241.00px;text-align:center;font-size:17.333px;line-height:24.76px;font-weight:normal;color:#676a6c;white-space:nowrap;">Yes</div>
<div class="abs" style="left:1572.00px;top:300.11px;width:135.00px;text-align:center;font-size:17.333px;line-height:24.76px;font-weight:normal;color:#676a6c;white-space:nowrap;">一度城成本中<br>心</div>
<div class="abs" style="left:1708.00px;top:300.11px;width:209.00px;text-align:center;font-size:17.333px;line-height:24.76px;font-weight:normal;color:#676a6c;white-space:nowrap;">北京店</div>
<div class="abs" style="left:1950.90px;top:300.20px;width:43px;height:29px;border-radius:15px;background:#1ab394;color:#fff;font-size:16px;line-height:29px;text-align:center;white-space:nowrap">Edit</div>
<div class="abs" style="left:1999.00px;top:300.20px;width:61px;height:29px;border-radius:15px;background:#ed5565;color:#fff;font-size:16px;line-height:29px;text-align:center;white-space:nowrap">Delete</div>
<div class="abs" style="left:2065.00px;top:300.20px;width:62px;height:29px;border-radius:15px;background:#ed5565;color:#fff;font-size:16px;line-height:29px;text-align:center;white-space:nowrap">Export</div>
<div class="abs" style="left:2010.00px;top:329.30px;width:57px;height:29px;border-radius:15px;background:#ed5565;color:#fff;font-size:16px;line-height:29px;text-align:center;white-space:nowrap">Clone</div>
<div class="abs" style="left:62.00px;top:379.73px;width:54.00px;text-align:center;font-size:17.333px;line-height:24.76px;font-weight:normal;color:#676a6c;white-space:nowrap;">2</div>
<div class="abs" style="left:117.00px;top:379.73px;width:104.00px;text-align:center;font-size:17.333px;line-height:24.76px;font-weight:normal;color:#676a6c;white-space:nowrap;">天津店</div>
<div class="abs" style="left:222.00px;top:379.73px;width:577.00px;text-align:center;font-size:17.333px;line-height:24.76px;font-weight:normal;color:#676a6c;white-space:nowrap;">天津市河东区卫国道132号</div>
<div class="abs" style="left:800.00px;top:379.73px;width:105.00px;text-align:center;font-size:17.333px;line-height:24.76px;font-weight:normal;color:#676a6c;white-space:nowrap;">39.13743</div>
<div class="abs" style="left:906.00px;top:379.73px;width:120.00px;text-align:center;font-size:17.333px;line-height:24.76px;font-weight:normal;color:#676a6c;white-space:nowrap;">117.204276</div>
<div class="abs" style="left:1027.00px;top:379.73px;width:75.00px;text-align:center;font-size:17.333px;line-height:24.76px;font-weight:normal;color:#676a6c;white-space:nowrap;">2000</div>
<div class="abs" style="left:1103.00px;top:379.73px;width:124.00px;text-align:center;font-size:17.333px;line-height:24.76px;font-weight:normal;color:#676a6c;white-space:nowrap;">Restaurant</div>
<div class="abs" style="left:1228.00px;top:379.73px;width:101.00px;text-align:center;font-size:17.333px;line-height:24.76px;font-weight:normal;color:#676a6c;white-space:nowrap;">John</div>
<div class="abs" style="left:1330.00px;top:379.73px;width:241.00px;text-align:center;font-size:17.333px;line-height:24.76px;font-weight:normal;color:#676a6c;white-space:nowrap;">Yes</div>
<div class="abs" style="left:1572.00px;top:379.73px;width:135.00px;text-align:center;font-size:17.333px;line-height:24.76px;font-weight:normal;color:#676a6c;white-space:nowrap;">一度城成本中<br>心</div>
<div class="abs" style="left:1708.00px;top:379.73px;width:209.00px;text-align:center;font-size:17.333px;line-height:24.76px;font-weight:normal;color:#676a6c;white-space:nowrap;">天津店</div>
<div class="abs" style="left:1950.90px;top:379.82px;width:43px;height:29px;border-radius:15px;background:#1ab394;color:#fff;font-size:16px;line-height:29px;text-align:center;white-space:nowrap">Edit</div>
<div class="abs" style="left:1999.00px;top:379.82px;width:61px;height:29px;border-radius:15px;background:#ed5565;color:#fff;font-size:16px;line-height:29px;text-align:center;white-space:nowrap">Delete</div>
<div class="abs" style="left:2065.00px;top:379.82px;width:62px;height:29px;border-radius:15px;background:#ed5565;color:#fff;font-size:16px;line-height:29px;text-align:center;white-space:nowrap">Export</div>
<div class="abs" style="left:2010.00px;top:408.92px;width:57px;height:29px;border-radius:15px;background:#ed5565;color:#fff;font-size:16px;line-height:29px;text-align:center;white-space:nowrap">Clone</div>
<div class="abs" style="left:62.00px;top:459.35px;width:54.00px;text-align:center;font-size:17.333px;line-height:24.76px;font-weight:normal;color:#676a6c;white-space:nowrap;">3</div>
<div class="abs" style="left:117.00px;top:459.35px;width:104.00px;text-align:center;font-size:17.333px;line-height:24.76px;font-weight:normal;color:#676a6c;white-space:nowrap;">沈阳店</div>
<div class="abs" style="left:222.00px;top:459.35px;width:577.00px;text-align:center;font-size:17.333px;line-height:24.76px;font-weight:normal;color:#676a6c;white-space:nowrap;">辽宁省沈阳市和平区文化路16号</div>
<div class="abs" style="left:800.00px;top:459.35px;width:105.00px;text-align:center;font-size:17.333px;line-height:24.76px;font-weight:normal;color:#676a6c;white-space:nowrap;">41.781425</div>
<div class="abs" style="left:906.00px;top:459.35px;width:120.00px;text-align:center;font-size:17.333px;line-height:24.76px;font-weight:normal;color:#676a6c;white-space:nowrap;">123.426836</div>
<div class="abs" style="left:1027.00px;top:459.35px;width:75.00px;text-align:center;font-size:17.333px;line-height:24.76px;font-weight:normal;color:#676a6c;white-space:nowrap;">2000</div>
<div class="abs" style="left:1103.00px;top:459.35px;width:124.00px;text-align:center;font-size:17.333px;line-height:24.76px;font-weight:normal;color:#676a6c;white-space:nowrap;">Restaurant</div>
<div class="abs" style="left:1228.00px;top:459.35px;width:101.00px;text-align:center;font-size:17.333px;line-height:24.76px;font-weight:normal;color:#676a6c;white-space:nowrap;">John</div>
<div class="abs" style="left:1330.00px;top:459.35px;width:241.00px;text-align:center;font-size:17.333px;line-height:24.76px;font-weight:normal;color:#676a6c;white-space:nowrap;">Yes</div>
<div class="abs" style="left:1572.00px;top:459.35px;width:135.00px;text-align:center;font-size:17.333px;line-height:24.76px;font-weight:normal;color:#676a6c;white-space:nowrap;">一度城成本中<br>心</div>
<div class="abs" style="left:1708.00px;top:459.35px;width:209.00px;text-align:center;font-size:17.333px;line-height:24.76px;font-weight:normal;color:#676a6c;white-space:nowrap;">沈阳店</div>
<div class="abs" style="left:1950.90px;top:459.44px;width:43px;height:29px;border-radius:15px;background:#1ab394;color:#fff;font-size:16px;line-height:29px;text-align:center;white-space:nowrap">Edit</div>
<div class="abs" style="left:1999.00px;top:459.44px;width:61px;height:29px;border-radius:15px;background:#ed5565;color:#fff;font-size:16px;line-height:29px;text-align:center;white-space:nowrap">Delete</div>
<div class="abs" style="left:2065.00px;top:459.44px;width:62px;height:29px;border-radius:15px;background:#ed5565;color:#fff;font-size:16px;line-height:29px;text-align:center;white-space:nowrap">Export</div>
<div class="abs" style="left:2010.00px;top:488.54px;width:57px;height:29px;border-radius:15px;background:#ed5565;color:#fff;font-size:16px;line-height:29px;text-align:center;white-space:nowrap">Clone</div>
<div class="abs" style="left:62.00px;top:538.97px;width:54.00px;text-align:center;font-size:17.333px;line-height:24.76px;font-weight:normal;color:#676a6c;white-space:nowrap;">4</div>
<div class="abs" style="left:117.00px;top:538.97px;width:104.00px;text-align:center;font-size:17.333px;line-height:24.76px;font-weight:normal;color:#676a6c;white-space:nowrap;">哈尔滨店</div>
<div class="abs" style="left:222.00px;top:538.97px;width:577.00px;text-align:center;font-size:17.333px;line-height:24.76px;font-weight:normal;color:#676a6c;white-space:nowrap;">黑龙江省哈尔滨市道里区中央大街69号</div>
<div class="abs" style="left:800.00px;top:538.97px;width:105.00px;text-align:center;font-size:17.333px;line-height:24.76px;font-weight:normal;color:#676a6c;white-space:nowrap;">45.775769</div>
<div class="abs" style="left:906.00px;top:538.97px;width:120.00px;text-align:center;font-size:17.333px;line-height:24.76px;font-weight:normal;color:#676a6c;white-space:nowrap;">126.620231</div>
<div class="abs" style="left:1027.00px;top:538.97px;width:75.00px;text-align:center;font-size:17.333px;line-height:24.76px;font-weight:normal;color:#676a6c;white-space:nowrap;">2000</div>
<div class="abs" style="left:1103.00px;top:538.97px;width:124.00px;text-align:center;font-size:17.333px;line-height:24.76px;font-weight:normal;color:#676a6c;white-space:nowrap;">Restaurant</div>
<div class="abs" style="left:1228.00px;top:538.97px;width:101.00px;text-align:center;font-size:17.333px;line-height:24.76px;font-weight:normal;color:#676a6c;white-space:nowrap;">John</div>
<div class="abs" style="left:1330.00px;top:538.97px;width:241.00px;text-align:center;font-size:17.333px;line-height:24.76px;font-weight:normal;color:#676a6c;white-space:nowrap;">Yes</div>
<div class="abs" style="left:1572.00px;top:538.97px;width:135.00px;text-align:center;font-size:17.333px;line-height:24.76px;font-weight:normal;color:#676a6c;white-space:nowrap;">一度城成本中<br>心</div>
<div class="abs" style="left:1708.00px;top:538.97px;width:209.00px;text-align:center;font-size:17.333px;line-height:24.76px;font-weight:normal;color:#676a6c;white-space:nowrap;">哈尔滨店</div>
<div class="abs" style="left:1950.90px;top:539.06px;width:43px;height:29px;border-radius:15px;background:#1ab394;color:#fff;font-size:16px;line-height:29px;text-align:center;white-space:nowrap">Edit</div>
<div class="abs" style="left:1999.00px;top:539.06px;width:61px;height:29px;border-radius:15px;background:#ed5565;color:#fff;font-size:16px;line-height:29px;text-align:center;white-space:nowrap">Delete</div>
<div class="abs" style="left:2065.00px;top:539.06px;width:62px;height:29px;border-radius:15px;background:#ed5565;color:#fff;font-size:16px;line-height:29px;text-align:center;white-space:nowrap">Export</div>
<div class="abs" style="left:2010.00px;top:568.16px;width:57px;height:29px;border-radius:15px;background:#ed5565;color:#fff;font-size:16px;line-height:29px;text-align:center;white-space:nowrap">Clone</div>
<div class="abs" style="left:62.00px;top:618.59px;width:54.00px;text-align:center;font-size:17.333px;line-height:24.76px;font-weight:normal;color:#676a6c;white-space:nowrap;">5</div>
<div class="abs" style="left:117.00px;top:618.59px;width:104.00px;text-align:center;font-size:17.333px;line-height:24.76px;font-weight:normal;color:#676a6c;white-space:nowrap;">上海店</div>
<div class="abs" style="left:222.00px;top:618.59px;width:577.00px;text-align:center;font-size:17.333px;line-height:24.76px;font-weight:normal;color:#676a6c;white-space:nowrap;">上海市黄浦区人民广场人民大道221号</div>
<div class="abs" style="left:800.00px;top:618.59px;width:105.00px;text-align:center;font-size:17.333px;line-height:24.76px;font-weight:normal;color:#676a6c;white-space:nowrap;">31.242017</div>
<div class="abs" style="left:906.00px;top:618.59px;width:120.00px;text-align:center;font-size:17.333px;line-height:24.76px;font-weight:normal;color:#676a6c;white-space:nowrap;">121.475528</div>
<div class="abs" style="left:1027.00px;top:618.59px;width:75.00px;text-align:center;font-size:17.333px;line-height:24.76px;font-weight:normal;color:#676a6c;white-space:nowrap;">2000</div>
<div class="abs" style="left:1103.00px;top:618.59px;width:124.00px;text-align:center;font-size:17.333px;line-height:24.76px;font-weight:normal;color:#676a6c;white-space:nowrap;">Restaurant</div>
<div class="abs" style="left:1228.00px;top:618.59px;width:101.00px;text-align:center;font-size:17.333px;line-height:24.76px;font-weight:normal;color:#676a6c;white-space:nowrap;">John</div>
<div class="abs" style="left:1330.00px;top:618.59px;width:241.00px;text-align:center;font-size:17.333px;line-height:24.76px;font-weight:normal;color:#676a6c;white-space:nowrap;">Yes</div>
<div class="abs" style="left:1572.00px;top:618.59px;width:135.00px;text-align:center;font-size:17.333px;line-height:24.76px;font-weight:normal;color:#676a6c;white-space:nowrap;">一度城成本中<br>心</div>
<div class="abs" style="left:1708.00px;top:618.59px;width:209.00px;text-align:center;font-size:17.333px;line-height:24.76px;font-weight:normal;color:#676a6c;white-space:nowrap;">上海店</div>
<div class="abs" style="left:1950.90px;top:618.68px;width:43px;height:29px;border-radius:15px;background:#1ab394;color:#fff;font-size:16px;line-height:29px;text-align:center;white-space:nowrap">Edit</div>
<div class="abs" style="left:1999.00px;top:618.68px;width:61px;height:29px;border-radius:15px;background:#ed5565;color:#fff;font-size:16px;line-height:29px;text-align:center;white-space:nowrap">Delete</div>
<div class="abs" style="left:2065.00px;top:618.68px;width:62px;height:29px;border-radius:15px;background:#ed5565;color:#fff;font-size:16px;line-height:29px;text-align:center;white-space:nowrap">Export</div>
<div class="abs" style="left:2010.00px;top:647.78px;width:57px;height:29px;border-radius:15px;background:#ed5565;color:#fff;font-size:16px;line-height:29px;text-align:center;white-space:nowrap">Clone</div>
<div class="abs" style="left:62.00px;top:698.21px;width:54.00px;text-align:center;font-size:17.333px;line-height:24.76px;font-weight:normal;color:#676a6c;white-space:nowrap;">6</div>
<div class="abs" style="left:117.00px;top:698.21px;width:104.00px;text-align:center;font-size:17.333px;line-height:24.76px;font-weight:normal;color:#676a6c;white-space:nowrap;">杭州店</div>
<div class="abs" style="left:222.00px;top:698.21px;width:577.00px;text-align:center;font-size:17.333px;line-height:24.76px;font-weight:normal;color:#676a6c;white-space:nowrap;">浙江省杭州市下城区体育场路428号</div>
<div class="abs" style="left:800.00px;top:698.21px;width:105.00px;text-align:center;font-size:17.333px;line-height:24.76px;font-weight:normal;color:#676a6c;white-space:nowrap;">30.316051</div>
<div class="abs" style="left:906.00px;top:698.21px;width:120.00px;text-align:center;font-size:17.333px;line-height:24.76px;font-weight:normal;color:#676a6c;white-space:nowrap;">120.149632</div>
<div class="abs" style="left:1027.00px;top:698.21px;width:75.00px;text-align:center;font-size:17.333px;line-height:24.76px;font-weight:normal;color:#676a6c;white-space:nowrap;">2000</div>
<div class="abs" style="left:1103.00px;top:698.21px;width:124.00px;text-align:center;font-size:17.333px;line-height:24.76px;font-weight:normal;color:#676a6c;white-space:nowrap;">Restaurant</div>
<div class="abs" style="left:1228.00px;top:698.21px;width:101.00px;text-align:center;font-size:17.333px;line-height:24.76px;font-weight:normal;color:#676a6c;white-space:nowrap;">John</div>
<div class="abs" style="left:1330.00px;top:698.21px;width:241.00px;text-align:center;font-size:17.333px;line-height:24.76px;font-weight:normal;color:#676a6c;white-space:nowrap;">Yes</div>
<div class="abs" style="left:1572.00px;top:698.21px;width:135.00px;text-align:center;font-size:17.333px;line-height:24.76px;font-weight:normal;color:#676a6c;white-space:nowrap;">一度城成本中<br>心</div>
<div class="abs" style="left:1708.00px;top:698.21px;width:209.00px;text-align:center;font-size:17.333px;line-height:24.76px;font-weight:normal;color:#676a6c;white-space:nowrap;">杭州店</div>
<div class="abs" style="left:1950.90px;top:698.30px;width:43px;height:29px;border-radius:15px;background:#1ab394;color:#fff;font-size:16px;line-height:29px;text-align:center;white-space:nowrap">Edit</div>
<div class="abs" style="left:1999.00px;top:698.30px;width:61px;height:29px;border-radius:15px;background:#ed5565;color:#fff;font-size:16px;line-height:29px;text-align:center;white-space:nowrap">Delete</div>
<div class="abs" style="left:2065.00px;top:698.30px;width:62px;height:29px;border-radius:15px;background:#ed5565;color:#fff;font-size:16px;line-height:29px;text-align:center;white-space:nowrap">Export</div>
<div class="abs" style="left:2010.00px;top:727.40px;width:57px;height:29px;border-radius:15px;background:#ed5565;color:#fff;font-size:16px;line-height:29px;text-align:center;white-space:nowrap">Clone</div>
<div class="abs" style="left:62.00px;top:777.83px;width:54.00px;text-align:center;font-size:17.333px;line-height:24.76px;font-weight:normal;color:#676a6c;white-space:nowrap;">7</div>
<div class="abs" style="left:117.00px;top:777.83px;width:104.00px;text-align:center;font-size:17.333px;line-height:24.76px;font-weight:normal;color:#676a6c;white-space:nowrap;">南京店</div>
<div class="abs" style="left:222.00px;top:777.83px;width:577.00px;text-align:center;font-size:17.333px;line-height:24.76px;font-weight:normal;color:#676a6c;white-space:nowrap;">江苏省南京市溧水区宝塔路</div>
<div class="abs" style="left:800.00px;top:777.83px;width:105.00px;text-align:center;font-size:17.333px;line-height:24.76px;font-weight:normal;color:#676a6c;white-space:nowrap;">31.757124</div>
<div class="abs" style="left:906.00px;top:777.83px;width:120.00px;text-align:center;font-size:17.333px;line-height:24.76px;font-weight:normal;color:#676a6c;white-space:nowrap;">119.04107</div>
<div class="abs" style="left:1027.00px;top:777.83px;width:75.00px;text-align:center;font-size:17.333px;line-height:24.76px;font-weight:normal;color:#676a6c;white-space:nowrap;">2000</div>
<div class="abs" style="left:1103.00px;top:777.83px;width:124.00px;text-align:center;font-size:17.333px;line-height:24.76px;font-weight:normal;color:#676a6c;white-space:nowrap;">Restaurant</div>
<div class="abs" style="left:1228.00px;top:777.83px;width:101.00px;text-align:center;font-size:17.333px;line-height:24.76px;font-weight:normal;color:#676a6c;white-space:nowrap;">John</div>
<div class="abs" style="left:1330.00px;top:777.83px;width:241.00px;text-align:center;font-size:17.333px;line-height:24.76px;font-weight:normal;color:#676a6c;white-space:nowrap;">Yes</div>
<div class="abs" style="left:1572.00px;top:777.83px;width:135.00px;text-align:center;font-size:17.333px;line-height:24.76px;font-weight:normal;color:#676a6c;white-space:nowrap;">一度城成本中<br>心</div>
<div class="abs" style="left:1708.00px;top:777.83px;width:209.00px;text-align:center;font-size:17.333px;line-height:24.76px;font-weight:normal;color:#676a6c;white-space:nowrap;">南京店</div>
<div class="abs" style="left:1950.90px;top:777.92px;width:43px;height:29px;border-radius:15px;background:#1ab394;color:#fff;font-size:16px;line-height:29px;text-align:center;white-space:nowrap">Edit</div>
<div class="abs" style="left:1999.00px;top:777.92px;width:61px;height:29px;border-radius:15px;background:#ed5565;color:#fff;font-size:16px;line-height:29px;text-align:center;white-space:nowrap">Delete</div>
<div class="abs" style="left:2065.00px;top:777.92px;width:62px;height:29px;border-radius:15px;background:#ed5565;color:#fff;font-size:16px;line-height:29px;text-align:center;white-space:nowrap">Export</div>
<div class="abs" style="left:2010.00px;top:807.02px;width:57px;height:29px;border-radius:15px;background:#ed5565;color:#fff;font-size:16px;line-height:29px;text-align:center;white-space:nowrap">Clone</div>
<div class="abs" style="left:62.00px;top:857.45px;width:54.00px;text-align:center;font-size:17.333px;line-height:24.76px;font-weight:normal;color:#676a6c;white-space:nowrap;">8</div>
<div class="abs" style="left:117.00px;top:857.45px;width:104.00px;text-align:center;font-size:17.333px;line-height:24.76px;font-weight:normal;color:#676a6c;white-space:nowrap;">苏州店</div>
<div class="abs" style="left:222.00px;top:857.45px;width:577.00px;text-align:center;font-size:17.333px;line-height:24.76px;font-weight:normal;color:#676a6c;white-space:nowrap;">江苏省苏州市 Canglang, 三香路345号 邮政编码: 215004</div>
<div class="abs" style="left:800.00px;top:857.45px;width:105.00px;text-align:center;font-size:17.333px;line-height:24.76px;font-weight:normal;color:#676a6c;white-space:nowrap;">31.30844</div>
<div class="abs" style="left:906.00px;top:857.45px;width:120.00px;text-align:center;font-size:17.333px;line-height:24.76px;font-weight:normal;color:#676a6c;white-space:nowrap;">120.600479</div>
<div class="abs" style="left:1027.00px;top:857.45px;width:75.00px;text-align:center;font-size:17.333px;line-height:24.76px;font-weight:normal;color:#676a6c;white-space:nowrap;">2000</div>
<div class="abs" style="left:1103.00px;top:857.45px;width:124.00px;text-align:center;font-size:17.333px;line-height:24.76px;font-weight:normal;color:#676a6c;white-space:nowrap;">Restaurant</div>
<div class="abs" style="left:1228.00px;top:857.45px;width:101.00px;text-align:center;font-size:17.333px;line-height:24.76px;font-weight:normal;color:#676a6c;white-space:nowrap;">John</div>
<div class="abs" style="left:1330.00px;top:857.45px;width:241.00px;text-align:center;font-size:17.333px;line-height:24.76px;font-weight:normal;color:#676a6c;white-space:nowrap;">Yes</div>
<div class="abs" style="left:1572.00px;top:857.45px;width:135.00px;text-align:center;font-size:17.333px;line-height:24.76px;font-weight:normal;color:#676a6c;white-space:nowrap;">一度城成本中<br>心</div>
<div class="abs" style="left:1708.00px;top:857.45px;width:209.00px;text-align:center;font-size:17.333px;line-height:24.76px;font-weight:normal;color:#676a6c;white-space:nowrap;">苏州店</div>
<div class="abs" style="left:1950.90px;top:857.54px;width:43px;height:29px;border-radius:15px;background:#1ab394;color:#fff;font-size:16px;line-height:29px;text-align:center;white-space:nowrap">Edit</div>
<div class="abs" style="left:1999.00px;top:857.54px;width:61px;height:29px;border-radius:15px;background:#ed5565;color:#fff;font-size:16px;line-height:29px;text-align:center;white-space:nowrap">Delete</div>
<div class="abs" style="left:2065.00px;top:857.54px;width:62px;height:29px;border-radius:15px;background:#ed5565;color:#fff;font-size:16px;line-height:29px;text-align:center;white-space:nowrap">Export</div>
<div class="abs" style="left:2010.00px;top:886.64px;width:57px;height:29px;border-radius:15px;background:#ed5565;color:#fff;font-size:16px;line-height:29px;text-align:center;white-space:nowrap">Clone</div>
<div class="abs" style="left:62.00px;top:937.07px;width:54.00px;text-align:center;font-size:17.333px;line-height:24.76px;font-weight:normal;color:#676a6c;white-space:nowrap;">9</div>
<div class="abs" style="left:117.00px;top:937.07px;width:104.00px;text-align:center;font-size:17.333px;line-height:24.76px;font-weight:normal;color:#676a6c;white-space:nowrap;">广州店</div>
<div class="abs" style="left:222.00px;top:937.07px;width:577.00px;text-align:center;font-size:17.333px;line-height:24.76px;font-weight:normal;color:#676a6c;white-space:nowrap;">广东省广州市越秀区中山四路199号</div>
<div class="abs" style="left:800.00px;top:937.07px;width:105.00px;text-align:center;font-size:17.333px;line-height:24.76px;font-weight:normal;color:#676a6c;white-space:nowrap;">23.131688</div>
<div class="abs" style="left:906.00px;top:937.07px;width:120.00px;text-align:center;font-size:17.333px;line-height:24.76px;font-weight:normal;color:#676a6c;white-space:nowrap;">113.271686</div>
<div class="abs" style="left:1027.00px;top:937.07px;width:75.00px;text-align:center;font-size:17.333px;line-height:24.76px;font-weight:normal;color:#676a6c;white-space:nowrap;">2000</div>
<div class="abs" style="left:1103.00px;top:937.07px;width:124.00px;text-align:center;font-size:17.333px;line-height:24.76px;font-weight:normal;color:#676a6c;white-space:nowrap;">Restaurant</div>
<div class="abs" style="left:1228.00px;top:937.07px;width:101.00px;text-align:center;font-size:17.333px;line-height:24.76px;font-weight:normal;color:#676a6c;white-space:nowrap;">John</div>
<div class="abs" style="left:1330.00px;top:937.07px;width:241.00px;text-align:center;font-size:17.333px;line-height:24.76px;font-weight:normal;color:#676a6c;white-space:nowrap;">Yes</div>
<div class="abs" style="left:1572.00px;top:937.07px;width:135.00px;text-align:center;font-size:17.333px;line-height:24.76px;font-weight:normal;color:#676a6c;white-space:nowrap;">一度城成本中<br>心</div>
<div class="abs" style="left:1708.00px;top:937.07px;width:209.00px;text-align:center;font-size:17.333px;line-height:24.76px;font-weight:normal;color:#676a6c;white-space:nowrap;">广州店</div>
<div class="abs" style="left:1950.90px;top:937.16px;width:43px;height:29px;border-radius:15px;background:#1ab394;color:#fff;font-size:16px;line-height:29px;text-align:center;white-space:nowrap">Edit</div>
<div class="abs" style="left:1999.00px;top:937.16px;width:61px;height:29px;border-radius:15px;background:#ed5565;color:#fff;font-size:16px;line-height:29px;text-align:center;white-space:nowrap">Delete</div>
<div class="abs" style="left:2065.00px;top:937.16px;width:62px;height:29px;border-radius:15px;background:#ed5565;color:#fff;font-size:16px;line-height:29px;text-align:center;white-space:nowrap">Export</div>
<div class="abs" style="left:2010.00px;top:966.26px;width:57px;height:29px;border-radius:15px;background:#ed5565;color:#fff;font-size:16px;line-height:29px;text-align:center;white-space:nowrap">Clone</div>
<div class="abs" style="left:62.00px;top:1016.69px;width:54.00px;text-align:center;font-size:17.333px;line-height:24.76px;font-weight:normal;color:#676a6c;white-space:nowrap;">10</div>
<div class="abs" style="left:117.00px;top:1016.69px;width:104.00px;text-align:center;font-size:17.333px;line-height:24.76px;font-weight:normal;color:#676a6c;white-space:nowrap;">深圳店</div>
<div class="abs" style="left:222.00px;top:1016.69px;width:577.00px;text-align:center;font-size:17.333px;line-height:24.76px;font-weight:normal;color:#676a6c;white-space:nowrap;">广东省深圳市福田区福田ＣＢＤ福华三路268号 邮政编码: 518048</div>
<div class="abs" style="left:800.00px;top:1016.69px;width:105.00px;text-align:center;font-size:17.333px;line-height:24.76px;font-weight:normal;color:#676a6c;white-space:nowrap;">22.555905</div>
<div class="abs" style="left:906.00px;top:1016.69px;width:120.00px;text-align:center;font-size:17.333px;line-height:24.76px;font-weight:normal;color:#676a6c;white-space:nowrap;">114.053405</div>
<div class="abs" style="left:1027.00px;top:1016.69px;width:75.00px;text-align:center;font-size:17.333px;line-height:24.76px;font-weight:normal;color:#676a6c;white-space:nowrap;">2000</div>
<div class="abs" style="left:1103.00px;top:1016.69px;width:124.00px;text-align:center;font-size:17.333px;line-height:24.76px;font-weight:normal;color:#676a6c;white-space:nowrap;">Restaurant</div>
<div class="abs" style="left:1228.00px;top:1016.69px;width:101.00px;text-align:center;font-size:17.333px;line-height:24.76px;font-weight:normal;color:#676a6c;white-space:nowrap;">John</div>
<div class="abs" style="left:1330.00px;top:1016.69px;width:241.00px;text-align:center;font-size:17.333px;line-height:24.76px;font-weight:normal;color:#676a6c;white-space:nowrap;">Yes</div>
<div class="abs" style="left:1572.00px;top:1016.69px;width:135.00px;text-align:center;font-size:17.333px;line-height:24.76px;font-weight:normal;color:#676a6c;white-space:nowrap;">一度城成本中<br>心</div>
<div class="abs" style="left:1708.00px;top:1016.69px;width:209.00px;text-align:center;font-size:17.333px;line-height:24.76px;font-weight:normal;color:#676a6c;white-space:nowrap;">深圳店</div>
<div class="abs" style="left:1950.90px;top:1016.78px;width:43px;height:29px;border-radius:15px;background:#1ab394;color:#fff;font-size:16px;line-height:29px;text-align:center;white-space:nowrap">Edit</div>
<div class="abs" style="left:1999.00px;top:1016.78px;width:61px;height:29px;border-radius:15px;background:#ed5565;color:#fff;font-size:16px;line-height:29px;text-align:center;white-space:nowrap">Delete</div>
<div class="abs" style="left:2065.00px;top:1016.78px;width:62px;height:29px;border-radius:15px;background:#ed5565;color:#fff;font-size:16px;line-height:29px;text-align:center;white-space:nowrap">Export</div>
<div class="abs" style="left:2010.00px;top:1045.88px;width:57px;height:29px;border-radius:15px;background:#ed5565;color:#fff;font-size:16px;line-height:29px;text-align:center;white-space:nowrap">Clone</div>
<div class="abs" style="left:62.00px;top:1096.31px;width:54.00px;text-align:center;font-size:17.333px;line-height:24.76px;font-weight:normal;color:#676a6c;white-space:nowrap;">11</div>
<div class="abs" style="left:117.00px;top:1096.31px;width:104.00px;text-align:center;font-size:17.333px;line-height:24.76px;font-weight:normal;color:#676a6c;white-space:nowrap;">香港店</div>
<div class="abs" style="left:222.00px;top:1096.31px;width:577.00px;text-align:center;font-size:17.333px;line-height:24.76px;font-weight:normal;color:#676a6c;white-space:nowrap;">Yu Yuet Lai Building, Shops D&amp;E,G/F, 43-55 Wyndham St, Central,<br>HongKong</div>
<div class="abs" style="left:800.00px;top:1096.31px;width:105.00px;text-align:center;font-size:17.333px;line-height:24.76px;font-weight:normal;color:#676a6c;white-space:nowrap;">22.285654</div>
<div class="abs" style="left:906.00px;top:1096.31px;width:120.00px;text-align:center;font-size:17.333px;line-height:24.76px;font-weight:normal;color:#676a6c;white-space:nowrap;">114.155632</div>
<div class="abs" style="left:1027.00px;top:1096.31px;width:75.00px;text-align:center;font-size:17.333px;line-height:24.76px;font-weight:normal;color:#676a6c;white-space:nowrap;">2000</div>
<div class="abs" style="left:1103.00px;top:1096.31px;width:124.00px;text-align:center;font-size:17.333px;line-height:24.76px;font-weight:normal;color:#676a6c;white-space:nowrap;">Restaurant</div>
<div class="abs" style="left:1228.00px;top:1096.31px;width:101.00px;text-align:center;font-size:17.333px;line-height:24.76px;font-weight:normal;color:#676a6c;white-space:nowrap;">John</div>
<div class="abs" style="left:1330.00px;top:1096.31px;width:241.00px;text-align:center;font-size:17.333px;line-height:24.76px;font-weight:normal;color:#676a6c;white-space:nowrap;">Yes</div>
<div class="abs" style="left:1572.00px;top:1096.31px;width:135.00px;text-align:center;font-size:17.333px;line-height:24.76px;font-weight:normal;color:#676a6c;white-space:nowrap;">一度城成本中<br>心</div>
<div class="abs" style="left:1708.00px;top:1096.31px;width:209.00px;text-align:center;font-size:17.333px;line-height:24.76px;font-weight:normal;color:#676a6c;white-space:nowrap;">香港店</div>
<div class="abs" style="left:1950.90px;top:1096.40px;width:43px;height:29px;border-radius:15px;background:#1ab394;color:#fff;font-size:16px;line-height:29px;text-align:center;white-space:nowrap">Edit</div>
<div class="abs" style="left:1999.00px;top:1096.40px;width:61px;height:29px;border-radius:15px;background:#ed5565;color:#fff;font-size:16px;line-height:29px;text-align:center;white-space:nowrap">Delete</div>
<div class="abs" style="left:2065.00px;top:1096.40px;width:62px;height:29px;border-radius:15px;background:#ed5565;color:#fff;font-size:16px;line-height:29px;text-align:center;white-space:nowrap">Export</div>
<div class="abs" style="left:2010.00px;top:1125.50px;width:57px;height:29px;border-radius:15px;background:#ed5565;color:#fff;font-size:16px;line-height:29px;text-align:center;white-space:nowrap">Clone</div>
<div class="abs" style="left:62.00px;top:1175.93px;width:54.00px;text-align:center;font-size:17.333px;line-height:24.76px;font-weight:normal;color:#676a6c;white-space:nowrap;">12</div>
<div class="abs" style="left:117.00px;top:1175.93px;width:104.00px;text-align:center;font-size:17.333px;line-height:24.76px;font-weight:normal;color:#676a6c;white-space:nowrap;">澳门店</div>
<div class="abs" style="left:222.00px;top:1175.93px;width:577.00px;text-align:center;font-size:17.333px;line-height:24.76px;font-weight:normal;color:#676a6c;white-space:nowrap;">Largo De Monte Carlo, No.203, Shop No.2, Edf. Sands Casino, 1 Andar,<br>Macao</div>
<div class="abs" style="left:800.00px;top:1175.93px;width:105.00px;text-align:center;font-size:17.333px;line-height:24.76px;font-weight:normal;color:#676a6c;white-space:nowrap;">22.191481</div>
<div class="abs" style="left:906.00px;top:1175.93px;width:120.00px;text-align:center;font-size:17.333px;line-height:24.76px;font-weight:normal;color:#676a6c;white-space:nowrap;">113.555092</div>
<div class="abs" style="left:1027.00px;top:1175.93px;width:75.00px;text-align:center;font-size:17.333px;line-height:24.76px;font-weight:normal;color:#676a6c;white-space:nowrap;">2000</div>
<div class="abs" style="left:1103.00px;top:1175.93px;width:124.00px;text-align:center;font-size:17.333px;line-height:24.76px;font-weight:normal;color:#676a6c;white-space:nowrap;">Restaurant</div>
<div class="abs" style="left:1228.00px;top:1175.93px;width:101.00px;text-align:center;font-size:17.333px;line-height:24.76px;font-weight:normal;color:#676a6c;white-space:nowrap;">John</div>
<div class="abs" style="left:1330.00px;top:1175.93px;width:241.00px;text-align:center;font-size:17.333px;line-height:24.76px;font-weight:normal;color:#676a6c;white-space:nowrap;">Yes</div>
<div class="abs" style="left:1572.00px;top:1175.93px;width:135.00px;text-align:center;font-size:17.333px;line-height:24.76px;font-weight:normal;color:#676a6c;white-space:nowrap;">一度城成本中<br>心</div>
<div class="abs" style="left:1708.00px;top:1175.93px;width:209.00px;text-align:center;font-size:17.333px;line-height:24.76px;font-weight:normal;color:#676a6c;white-space:nowrap;">澳门店</div>
<div class="abs" style="left:1950.90px;top:1176.02px;width:43px;height:29px;border-radius:15px;background:#1ab394;color:#fff;font-size:16px;line-height:29px;text-align:center;white-space:nowrap">Edit</div>
<div class="abs" style="left:1999.00px;top:1176.02px;width:61px;height:29px;border-radius:15px;background:#ed5565;color:#fff;font-size:16px;line-height:29px;text-align:center;white-space:nowrap">Delete</div>
<div class="abs" style="left:2065.00px;top:1176.02px;width:62px;height:29px;border-radius:15px;background:#ed5565;color:#fff;font-size:16px;line-height:29px;text-align:center;white-space:nowrap">Export</div>
<div class="abs" style="left:2010.00px;top:1205.12px;width:57px;height:29px;border-radius:15px;background:#ed5565;color:#fff;font-size:16px;line-height:29px;text-align:center;white-space:nowrap">Clone</div>
</div>
<div id="glow" class="abs"></div>
</body></html>
